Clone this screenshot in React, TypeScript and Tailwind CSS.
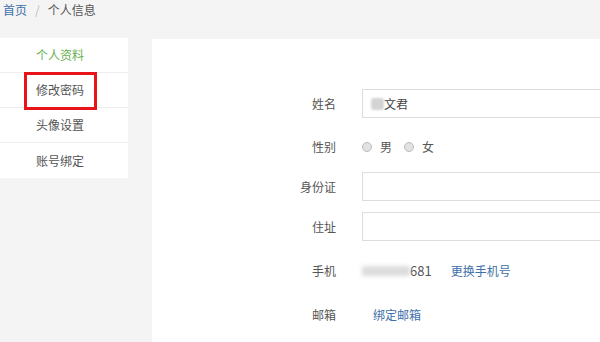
import React from "react";

const font = { fontFamily: '"Noto Sans CJK SC", "Microsoft YaHei", sans-serif' };

function Row({ label, children, className }: { label: string; children: React.ReactNode; className: string }) {
  return (
    <div className={`flex items-center h-[29px] ${className}`}>
      <div className="w-[184px] text-right text-[12px] text-[#555] shrink-0">{label}</div>
      <div className="ml-[26px] flex items-center flex-1 min-w-0 h-full">{children}</div>
    </div>
  );
}

function Radio({ label }: { label: string }) {
  return (
    <div className="flex items-center mr-[12px]">
      <span className="w-[10px] h-[10px] rounded-full border border-[#bbb] bg-[#e2e2e2]" />
      <span className="ml-[8px] text-[12px] text-[#555]">{label}</span>
    </div>
  );
}

export default function App() {
  const items = ["个人资料", "修改密码", "头像设置", "账号绑定"];
  return (
    <div className="w-[600px] h-[342px] bg-[#f4f4f4] overflow-hidden" style={font}>
      <div className="h-[19px] flex items-center pl-[3px] text-[12px]">
        <span className="text-[#3d6fa8]">首页</span>
        <span className="text-[#bbb] mx-[8px]">/</span>
        <span className="text-[#555]">个人信息</span>
      </div>
      <div className="flex">
        <div className="w-[128px] shrink-0 mt-[19px] bg-white self-start">
          {items.map((t, i) => (
            <div
              key={t}
              className={`relative h-[35px] flex items-center pl-[36px] text-[12px] ${
                i < 3 ? "border-b border-[#eee]" : ""
              } ${i === 0 ? "text-[#67b04f]" : "text-[#555]"}`}
            >
              {t}
              {i === 1 && (
                <div className="absolute left-[24px] top-[-1px] w-[73px] h-[38px] border-[3px] border-[#e8141a]" />
              )}
            </div>
          ))}
        </div>
        <div className="ml-[24px] mt-[20px] flex-1 min-w-0 h-[303px] bg-white overflow-hidden">
          <Row label="姓名" className="mt-[50px]">
            <div className="w-[260px] shrink-0 h-full border border-[#ddd] flex items-center pl-[8px]">
              <span className="w-[13px] h-[12px] rounded-[3px] bg-[#d4d4d4] blur-[1px]" />
              <span className="text-[12px] text-[#444]">文君</span>
            </div>
          </Row>
          <Row label="性别" className="mt-[14px]">
            <Radio label="男" />
            <Radio label="女" />
          </Row>
          <Row label="身份证" className="mt-[11px]">
            <div className="w-[260px] shrink-0 h-full border border-[#ddd]" />
          </Row>
          <Row label="住址" className="mt-[11px]">
            <div className="w-[260px] shrink-0 h-full border border-[#ddd]" />
          </Row>
          <Row label="手机" className="mt-[15px]">
            <span className="w-[48px] h-[10px] bg-[#dcdcdc] blur-[2px]" />
            <span className="text-[13px] text-[#555]">681</span>
            <span className="ml-[19px] text-[12px] text-[#3d6fa8]">更换手机号</span>
          </Row>
          <Row label="邮箱" className="mt-[15px]">
            <span className="ml-[11px] text-[12px] text-[#3d6fa8]">绑定邮箱</span>
          </Row>
        </div>
      </div>
    </div>
  );
}
